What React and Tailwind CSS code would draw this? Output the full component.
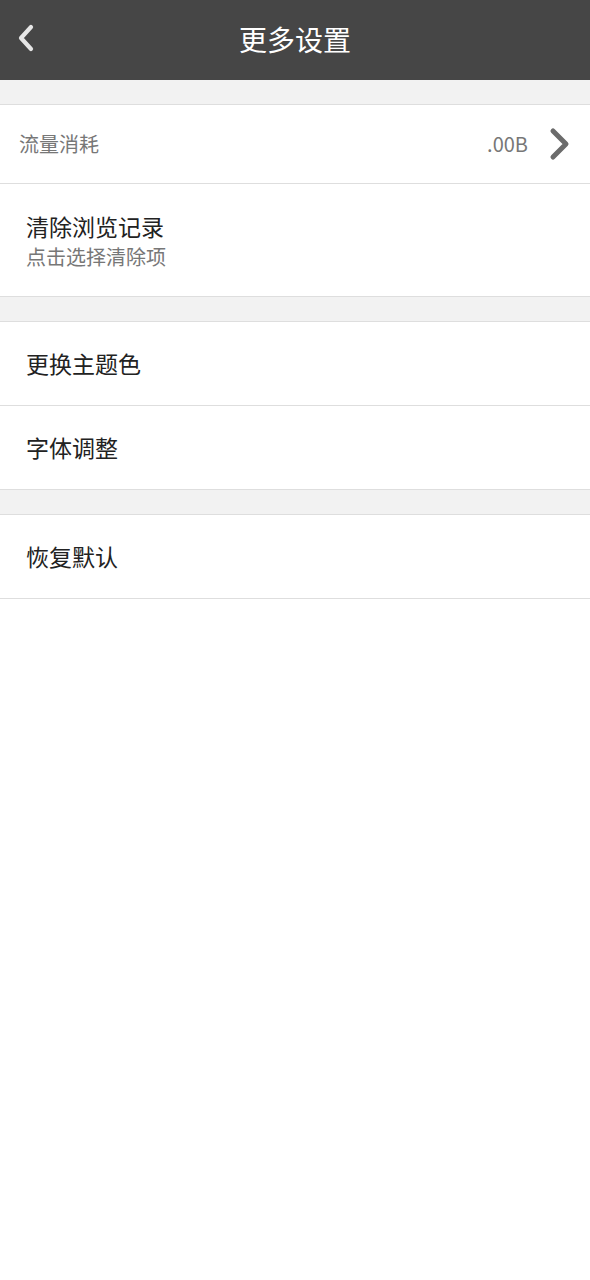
import React from "react";

const font = { fontFamily: '"Noto Sans CJK SC", "Noto Sans", sans-serif' };

function Row({ children, className = "" }) {
  return (
    <div className={`flex items-center bg-white border-b border-[#dedede] ${className}`}>
      {children}
    </div>
  );
}

function Gap() {
  return <div className="h-[25px] bg-[#f2f2f2] border-b border-[#dedede]" />;
}

export default function App() {
  return (
    <div className="w-[590px] min-h-[1280px] bg-white" style={font}>
      <div className="relative h-[80px] bg-[#464646] flex items-center justify-center">
        <svg className="absolute left-[15px] top-[23px]" width="22" height="30" viewBox="0 0 22 30">
          <path d="M16 4 L6 15 L16 26" fill="none" stroke="#e6e6e6" strokeWidth="4.2" strokeLinecap="round" strokeLinejoin="round" />
        </svg>
        <span className="text-[28px] text-white leading-none -mt-[2px]">更多设置</span>
      </div>
      <Gap />
      <Row className="h-[79px] pl-[19px] pr-[18px]">
        <span className="text-[20px] text-[#777777] flex-1">流量消耗</span>
        <span className="text-[20px] text-[#777777] mr-[20px]">.00B</span>
        <svg width="24" height="34" viewBox="0 0 24 34">
          <path d="M5 4 L18 17 L5 30" fill="none" stroke="#6b6b6b" strokeWidth="5" strokeLinecap="round" strokeLinejoin="round" />
        </svg>
      </Row>
      <Row className="h-[113px] pl-[26px]">
        <div className="flex flex-col pt-[2px]">
          <span className="text-[23px] text-[#222222] leading-[32px]">清除浏览记录</span>
          <span className="text-[20px] text-[#777777] leading-[30px]">点击选择清除项</span>
        </div>
      </Row>
      <Gap />
      <Row className="h-[84px] pl-[26px]">
        <span className="text-[23px] text-[#222222]">更换主题色</span>
      </Row>
      <Row className="h-[84px] pl-[26px]">
        <span className="text-[23px] text-[#222222]">字体调整</span>
      </Row>
      <Gap />
      <Row className="h-[84px] pl-[26px]">
        <span className="text-[23px] text-[#222222]">恢复默认</span>
      </Row>
    </div>
  );
}
